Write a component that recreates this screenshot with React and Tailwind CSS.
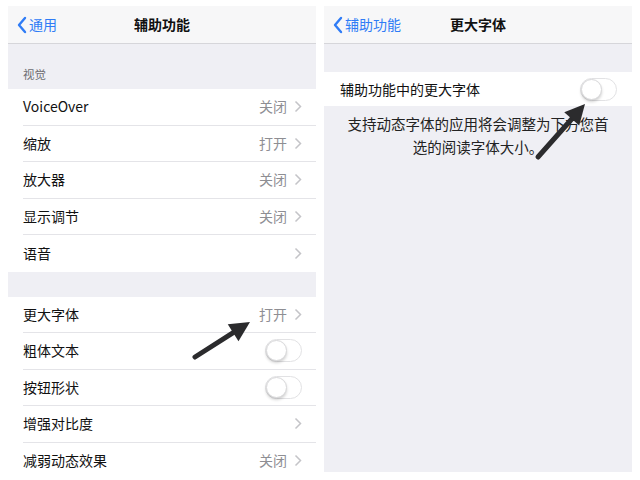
import React from 'react';

const font = { fontFamily: '"Noto Sans CJK SC", "Noto Sans", sans-serif' };

const Chevron = () => (
    <svg width="8" height="13" viewBox="0 0 8 13" className="ml-[7px]">
        <path d="M1.5 1.5 L6.5 6.5 L1.5 11.5" fill="none" stroke="#c4c4c8" strokeWidth="1.5" />
    </svg>
);

const Toggle = () => (
    <div className="w-[37px] h-[23px] rounded-full border border-[#e2e2e4] bg-white relative">
        <div className="absolute left-0 top-0 w-[21px] h-[21px] rounded-full bg-white border border-[#d8d8da] shadow-[0_2px_3px_rgba(0,0,0,0.18)]" />
    </div>
);

const Row = ({ label, value, chevron, toggle, last }) => (
    <div className="h-[36.5px] flex items-center pl-[15px] bg-white">
        <div className={`flex-1 h-full flex items-center pr-[14px] ${last ? '' : 'border-b border-[#e4e4e8]'}`}>
            <span className="flex-1 text-[14px] text-[#111]">{label}</span>
            {value && <span className="text-[14px] text-[#8e8e93]">{value}</span>}
            {chevron && <Chevron />}
            {toggle && <Toggle />}
        </div>
    </div>
);

const NavBar = ({ back, title }) => (
    <div className="h-[38px] bg-[#f7f7f8] border-b border-[#d6d6da] flex items-center relative">
        <div className="flex items-center pl-[8px] text-[#2f7cf6] text-[14px]">
            <svg width="12" height="18" viewBox="0 0 12 18">
                <path d="M9 2 L3 9 L9 16" fill="none" stroke="#2f7cf6" strokeWidth="2.4" strokeLinecap="round" strokeLinejoin="round" />
            </svg>
            <span className="ml-[1px]">{back}</span>
        </div>
        <div className="absolute inset-0 flex items-center justify-center text-[14px] font-semibold text-[#111] pointer-events-none">{title}</div>
    </div>
);

const Arrow = ({ x1, y1, x2, y2, className }) => {
    const dx = x2 - x1, dy = y2 - y1;
    const len = Math.sqrt(dx * dx + dy * dy);
    const ux = dx / len, uy = dy / len;
    const hl = 20, hw = 10;
    const bx = x2 - ux * hl, by = y2 - uy * hl;
    const p1 = `${bx - uy * hw},${by + ux * hw}`;
    const p2 = `${bx + uy * hw},${by - ux * hw}`;
    return (
        <svg className={className} width="640" height="480" viewBox="0 0 640 480">
            <line x1={x1} y1={y1} x2={bx + ux * 2} y2={by + uy * 2} stroke="#2b2b2d" strokeWidth="5" strokeLinecap="round" />
            <polygon points={`${x2},${y2} ${p1} ${p2}`} fill="#2b2b2d" />
        </svg>
    );
};

export default function App() {
    return (
        <div className="w-[640px] h-[480px] bg-white relative overflow-hidden" style={font}>
            <div className="flex gap-[8px] pl-[8px] pt-[6px]">
                {/* left screen */}
                <div className="w-[308px] h-[466px] bg-[#efeff4] overflow-hidden">
                    <NavBar back="通用" title="辅助功能" />
                    <div className="h-[45px] flex items-end pl-[15px] pb-[6px] text-[11.5px] text-[#6d6d72]">视觉</div>
                    <Row label="VoiceOver" value="关闭" chevron />
                    <Row label="缩放" value="打开" chevron />
                    <Row label="放大器" value="关闭" chevron />
                    <Row label="显示调节" value="关闭" chevron />
                    <Row label="语音" chevron last />
                    <div className="h-[25px]" />
                    <Row label="更大字体" value="打开" chevron />
                    <Row label="粗体文本" toggle />
                    <Row label="按钮形状" toggle />
                    <Row label="增强对比度" chevron />
                    <Row label="减弱动态效果" value="关闭" chevron last />
                </div>
                {/* right screen */}
                <div className="w-[308px] h-[466px] bg-[#efeff4] overflow-hidden">
                    <NavBar back="辅助功能" title="更大字体" />
                    <div className="h-[28px]" />
                    <div className="h-[34px] bg-white flex items-center pl-[16px] pr-[15px]">
                        <span className="flex-1 text-[14px] text-[#111]">辅助功能中的更大字体</span>
                        <Toggle />
                    </div>
                    <div className="px-[20px] pt-[6px] text-center text-[14.5px] leading-[23px] text-[#222]">
                        支持动态字体的应用将会调整为下方您首选的阅读字体大小。
                    </div>
                </div>
            </div>
            <Arrow className="absolute left-0 top-0 pointer-events-none" x1={195} y1={357} x2={250} y2={322} />
            <Arrow className="absolute left-0 top-0 pointer-events-none" x1={538} y1={157} x2={585} y2={104} />
        </div>
    );
}
